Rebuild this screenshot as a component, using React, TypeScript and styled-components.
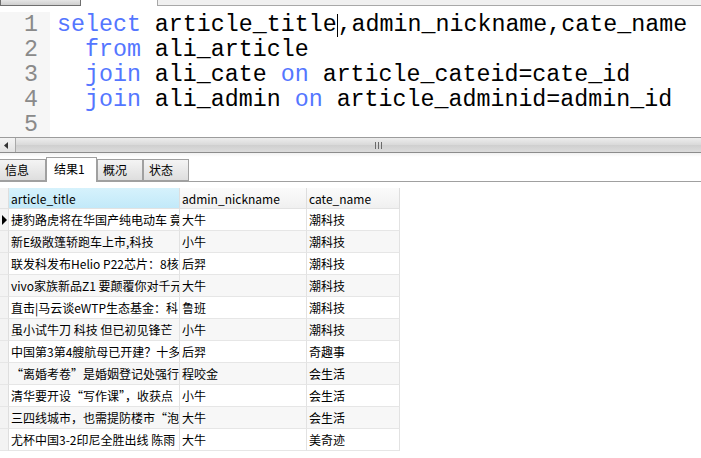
import React from "react";
import styled, { createGlobalStyle } from "styled-components";

const Global = createGlobalStyle`
  html, body { margin: 0; padding: 0; background: #fff; overflow: hidden; }
  * { box-sizing: border-box; }
`;

const Page = styled.div`
  width: 701px;
  height: 458px;
  display: flex;
  flex-direction: column;
  background: #fff;
  overflow: hidden;
`;

const TopStrip = styled.div`
  height: 6px;
  display: flex;
  gap: 76px;
`;

const StripButton = styled.div`
  width: 81px;
  height: 6px;
  background: linear-gradient(#e6e6e6, #cfcfcf);
  border: 1px solid #6f6f6f;
  border-top: none;
`;

const StripBox = styled.div`
  flex: 1;
  height: 6px;
  background: #f0f0f0;
  border: 1px solid #a8a8a8;
  border-top: none;
  border-right: none;
`;

const Editor = styled.div`
  margin-top: 6px;
  height: 125px;
  display: flex;
  font-family: "Liberation Mono", "Courier New", monospace;
  font-size: 23.3px;
  line-height: 25px;
`;

const Gutter = styled.div`
  width: 50px;
  padding: 1px 12px 0 0;
  background: #f6f6f6;
  color: #8a8a8a;
  text-align: right;
`;

const Code = styled.div`
  padding: 1px 0 0 7px;
  white-space: pre;
  color: #000;
`;

const Line = styled.div`
  height: 25px;
  display: block;
  white-space: pre;
`;

const Kw = styled.span`
  color: #5476ff;
`;

const Caret = styled.span`
  display: inline-block;
  width: 0;
  border-left: 1px solid #000;
  height: 23px;
  vertical-align: -6px;
`;

const HScroll = styled.div`
  height: 16px;
  display: flex;
  border-top: 1px solid #9c9c9c;
  border-bottom: 1px solid #8c8c8c;
`;

const ArrowButton = styled.div`
  width: 15px;
  background: linear-gradient(#f4f4f4, #e2e2e2);
  display: flex;
  align-items: center;
  padding-left: 4px;
`;

const Thumb = styled.div`
  flex: 1;
  background: linear-gradient(#ededed, #d9d9d9 50%, #cfcfcf 51%, #dcdcdc);
  border-left: 1px solid #a9a9a9;
  display: flex;
  align-items: center;
  justify-content: center;
`;

const Grip = styled.div`
  display: flex;
  gap: 2px;
  margin-left: 40px;
`;

const GripBar = styled.span`
  width: 1px;
  height: 7px;
  background: #6a6a6a;
`;

const BelowScroll = styled.div`
  height: 4px;
  background: linear-gradient(#f1f1f1, #fff);
`;

const TabStrip = styled.div`
  height: 25px;
  display: flex;
  align-items: flex-end;
  border-bottom: 1px solid #a0a0a0;
  font-family: "Noto Sans CJK SC", sans-serif;
  font-size: 12px;
  color: #000;
`;

const Tab = styled.div<{ $active?: boolean; $first?: boolean; $w: number }>`
  width: ${(p) => p.$w}px;
  height: ${(p) => (p.$active ? 25 : 22)}px;
  margin-bottom: ${(p) => (p.$active ? -1 : 0)}px;
  background: ${(p) =>
    p.$active ? "#fff" : "linear-gradient(#f4f4f4, #dedede)"};
  border: 1px solid #a0a0a0;
  border-bottom: ${(p) => (p.$active ? "none" : "1px solid #a0a0a0")};
  border-left: ${(p) => (p.$first ? "none" : "1px solid #a0a0a0")};
  display: flex;
  align-items: center;
  padding-left: ${(p) => (p.$active ? 7 : 5)}px;
  padding-bottom: ${(p) => (p.$active ? 3 : 0)}px;
  line-height: 1;
`;

const Grid = styled.div`
  margin-top: 6px;
  width: 400px;
  display: grid;
  grid-template-columns: 9px 171px 127px 93px;
  grid-auto-rows: 22px;
  grid-template-rows: 21px;
  font-family: "Noto Sans CJK SC", sans-serif;
  font-size: 12px;
  color: #000;
`;

const HeadCell = styled.div<{ $sel?: boolean; $corner?: boolean }>`
  background: ${(p) =>
    p.$corner
      ? "#f3f3f3"
      : p.$sel
      ? "linear-gradient(#d6f2fc, #c2e9f9)"
      : "linear-gradient(#fbfbfb, #f0f0f0)"};
  border-right: 1px solid #dedede;
  border-bottom: 1px solid #e2e2e2;
  display: flex;
  align-items: center;
  padding-left: 2px;
  white-space: nowrap;
  overflow: hidden;
`;

const Indicator = styled.div`
  background: #f3f3f3;
  border-right: 1px solid #dedede;
  border-bottom: 1px solid #e6e6e6;
  display: flex;
  align-items: center;
  padding-left: 2px;
`;

const Triangle = styled.span`
  width: 0;
  height: 0;
  border-top: 5px solid transparent;
  border-bottom: 5px solid transparent;
  border-left: 5px solid #000;
`;

const Cell = styled.div<{ $alt?: boolean }>`
  background: ${(p) => (p.$alt ? "#f7f7f7" : "#fff")};
  border-right: 1px solid #e2e2e2;
  border-bottom: 1px solid #e6e6e6;
  display: flex;
  align-items: center;
  padding-left: 2px;
  white-space: nowrap;
  overflow: hidden;
`;

const rows: [string, string, string][] = [
  ["捷豹路虎将在华国产纯电动车 竟", "大牛", "潮科技"],
  ["新E级敞篷轿跑车上市,科技", "小牛", "潮科技"],
  ["联发科发布Helio P22芯片：8核", "后羿", "潮科技"],
  ["vivo家族新品Z1 要颠覆你对千元", "大牛", "潮科技"],
  ["直击|马云谈eWTP生态基金：科", "鲁班", "潮科技"],
  ["虽小试牛刀 科技 但已初见锋芒", "小牛", "潮科技"],
  ["中国第3第4艘航母已开建？十多", "后羿", "奇趣事"],
  ["“离婚考卷”是婚姻登记处强行", "程咬金", "会生活"],
  ["清华要开设“写作课”，收获点", "小牛", "会生活"],
  ["三四线城市，也需提防楼市“泡", "大牛", "会生活"],
  ["尤杯中国3-2印尼全胜出线 陈雨", "大牛", "美奇迹"],
];

export default function App() {
  return (
    <Page>
      <Global />
      <TopStrip>
        <StripButton />
        <StripBox />
      </TopStrip>
      <Editor>
        <Gutter>
          {[1, 2, 3, 4, 5].map((n) => (
            <Line key={n}>{n}</Line>
          ))}
        </Gutter>
        <Code>
          <Line>
            <Kw>select</Kw> article_title<Caret />,admin_nickname,cate_name
          </Line>
          <Line>
            {"  "}<Kw>from</Kw> ali_article
          </Line>
          <Line>
            {"  "}<Kw>join</Kw> ali_cate <Kw>on</Kw> article_cateid=cate_id
          </Line>
          <Line>
            {"  "}<Kw>join</Kw> ali_admin <Kw>on</Kw> article_adminid=admin_id
          </Line>
          <Line />
        </Code>
      </Editor>
      <HScroll>
        <ArrowButton>
          <svg width="4" height="7" viewBox="0 0 4 7">
            <path d="M4 0 L0 3.5 L4 7 Z" fill="#333" />
          </svg>
        </ArrowButton>
        <Thumb>
          <Grip>
            <GripBar />
            <GripBar />
            <GripBar />
          </Grip>
        </Thumb>
      </HScroll>
      <BelowScroll />
      <TabStrip>
        <Tab $w={46} $first>信息</Tab>
        <Tab $w={51} $active>结果1</Tab>
        <Tab $w={46}>概况</Tab>
        <Tab $w={46}>状态</Tab>
      </TabStrip>
      <Grid>
        <HeadCell $corner />
        <HeadCell $sel>article_title</HeadCell>
        <HeadCell>admin_nickname</HeadCell>
        <HeadCell>cate_name</HeadCell>
        {rows.map((r, i) => (
          <React.Fragment key={i}>
            <Indicator>{i === 0 && <Triangle />}</Indicator>
            <Cell $alt={i % 2 === 1}>{r[0]}</Cell>
            <Cell $alt={i % 2 === 1}>{r[1]}</Cell>
            <Cell $alt={i % 2 === 1}>{r[2]}</Cell>
          </React.Fragment>
        ))}
      </Grid>
    </Page>
  );
}
